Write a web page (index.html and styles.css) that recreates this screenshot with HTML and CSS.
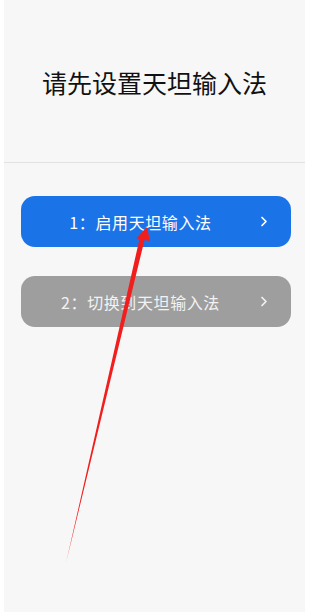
FILE: index.html
```html
<!DOCTYPE html>
<html lang="zh">
<head>
<meta charset="utf-8">
<link rel="stylesheet" href="styles.css">
</head>
<body>
<div class="screen">
  <header class="header">
    <h1 class="title">请先设置天坦输入法</h1>
  </header>
  <div class="steps">
    <button class="step step-active">
      <span class="step-label">1：启用天坦输入法</span>
      <svg class="chev" width="8" height="11" viewBox="0 0 8 11"><path d="M2 1.5 L6 5.5 L2 9.5" fill="none" stroke="#fff" stroke-width="1.7" stroke-linecap="round" stroke-linejoin="round"/></svg>
    </button>
    <button class="step step-disabled">
      <span class="step-label">2：切换到天坦输入法</span>
      <svg class="chev" width="8" height="11" viewBox="0 0 8 11"><path d="M2 1.5 L6 5.5 L2 9.5" fill="none" stroke="#f2f2f2" stroke-width="1.7" stroke-linecap="round" stroke-linejoin="round"/></svg>
    </button>
  </div>
  <svg class="annotation" width="307" height="613" viewBox="0 0 307 613">
    <polygon points="147,227 150,241 144.5,240 66,563 139.5,239 136.5,238.5" fill="#f21d1d"/>
  </svg>
</div>
</body>
</html>
```
FILE: styles.css
```css
html, body {
  margin: 0;
  padding: 0;
  background: #ffffff;
}
body {
  font-family: "Noto Sans CJK SC", "Noto Sans", sans-serif;
}
.screen {
  position: relative;
  width: 301px;
  margin: 0 0 0 4px;
  height: 612px;
  background: #f7f7f7;
}
.header {
  height: 162px;
  border-bottom: 1px solid #e2e2e2;
  display: flex;
  align-items: center;
  justify-content: center;
}
.title {
  margin: 0;
  font-size: 25px;
  font-weight: 400;
  color: #111111;
  letter-spacing: 0;
  padding-top: 2px;
}
.steps {
  display: flex;
  flex-direction: column;
  gap: 29px;
  padding: 33px 14px 0 17px;
}
.step {
  display: flex;
  align-items: center;
  height: 51px;
  border: none;
  border-radius: 14px;
  padding: 0 23px 0 0;
  font-family: inherit;
  font-size: 16px;
  letter-spacing: 0.6px;
  color: #ffffff;
  cursor: pointer;
}
.step-active {
  background: #1b73e8;
}
.step-disabled {
  background: #9e9e9e;
  color: #f2f2f2;
}
.step-label {
  flex: 1;
  text-align: center;
}
.chev {
  display: block;
}
.annotation {
  position: absolute;
  left: -4px;
  top: 0;
  pointer-events: none;
}
```
